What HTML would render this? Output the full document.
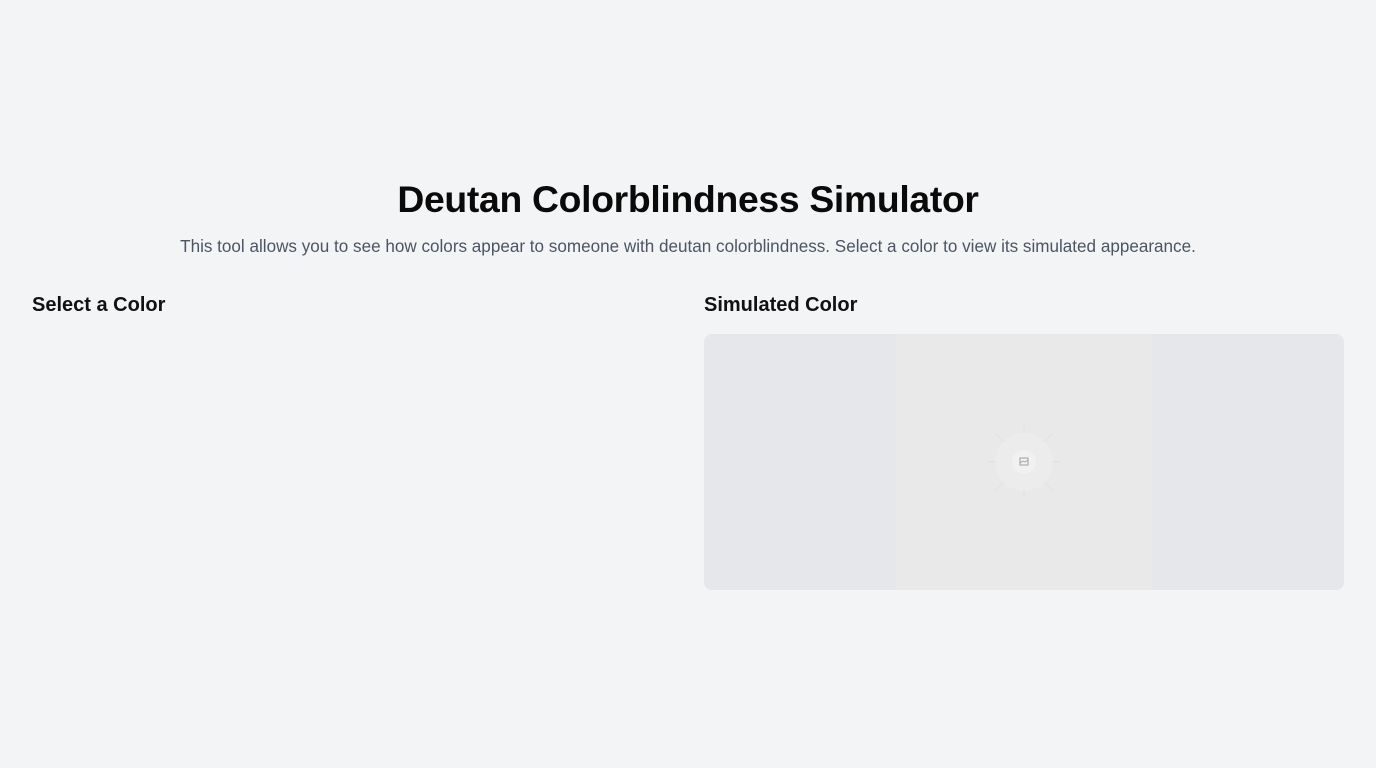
<!DOCTYPE html>
<html><head><meta charset="utf-8"><style>
*{margin:0;padding:0;box-sizing:border-box}
body{width:1376px;height:768px;background:#f3f4f6;font-family:"Liberation Sans",sans-serif;position:relative;overflow:hidden}
h1{position:absolute;top:178px;left:0;width:1376px;text-align:center;font-size:37.3px;font-weight:700;color:#0a0a0a;letter-spacing:-0.3px}
p{position:absolute;top:237px;left:0;width:1376px;text-align:center;font-size:17.1px;color:#4b5563}
h2{position:absolute;top:294px;font-size:20px;font-weight:700;color:#111}
.box{position:absolute;left:704px;top:334px;width:640px;height:256px;background:#e5e7eb;border-radius:8px;overflow:hidden}
.inner{position:absolute;left:192px;top:0;width:256px;height:256px;background:#e9e9e9}
</style></head><body>
<h1>Deutan Colorblindness Simulator</h1>
<p>This tool allows you to see how colors appear to someone with deutan colorblindness. Select a color to view its simulated appearance.</p>
<h2 style="left:32px">Select a Color</h2>
<h2 style="left:704px">Simulated Color</h2>
<div class="box"><div class="inner">
<svg width="256" height="256" viewBox="0 0 256 256" style="position:absolute;left:0;top:0">
<g stroke="#e2e2e2" stroke-width="1.2">
<line x1="128" y1="92" x2="128" y2="164"/><line x1="92" y1="128" x2="164" y2="128"/>
<line x1="99" y1="99" x2="157" y2="157"/><line x1="157" y1="99" x2="99" y2="157"/>
</g>
<circle cx="128" cy="128" r="29" fill="#ececec" opacity="0.9"/>
<circle cx="128" cy="128" r="12" fill="#f1f1f1"/>
<rect x="124" y="124" width="8" height="7" fill="none" stroke="#a0a0a0" stroke-width="1"/>
<path d="M124 129 l3-2 2 1 3-2" fill="none" stroke="#a0a0a0" stroke-width="0.8"/>
</svg>
</div></div>
</body></html>
